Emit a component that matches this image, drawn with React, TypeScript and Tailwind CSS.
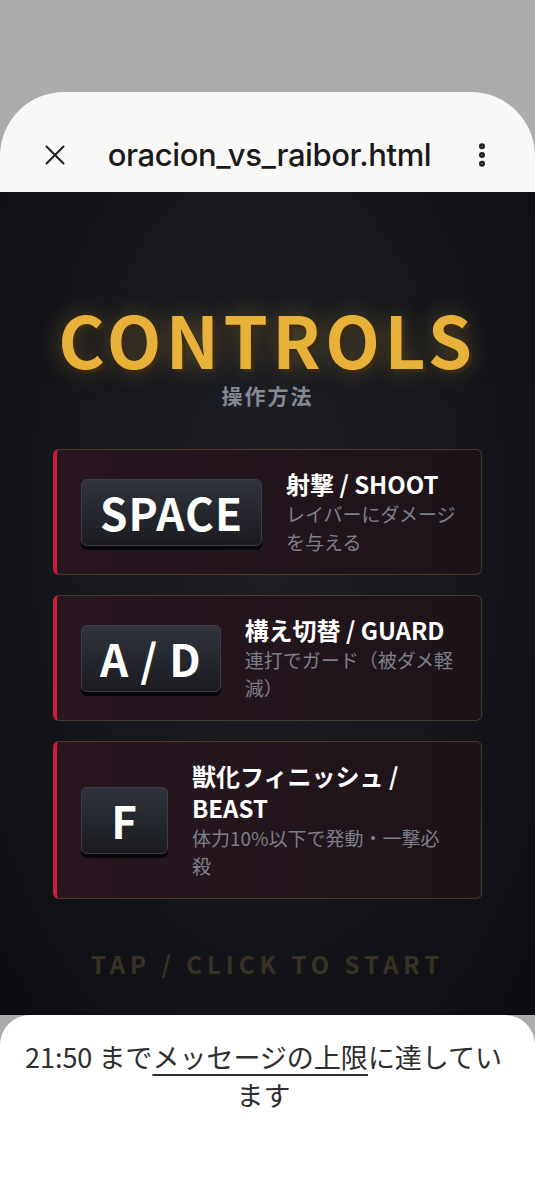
import { X, EllipsisVertical } from 'lucide-react'

interface ControlItem {
  keyLabel: string
  title: string
  desc: string
}

const CONTROLS: ControlItem[] = [
  { keyLabel: 'SPACE', title: '射撃 / SHOOT', desc: 'レイバーにダメージを与える' },
  { keyLabel: 'A / D', title: '構え切替 / GUARD', desc: '連打でガード（被ダメ軽減）' },
  { keyLabel: 'F', title: '獣化フィニッシュ / BEAST', desc: '体力10%以下で発動・一撃必殺' },
]

const jp = "font-['Noto_Sans_CJK_JP','Noto_Sans',sans-serif]"

function ControlCard({ item }: { item: ControlItem }) {
  return (
    <div className="flex items-center gap-6 rounded-md border border-[#4a3a2c] border-l-4 border-l-[#c81e3a] bg-gradient-to-r from-[#2a1620] to-[#1c1419] pl-6 pr-[24px] py-[18px]">
      <div className="flex-shrink-0 min-w-[87px] justify-center rounded-md border border-[#3b3e46] bg-gradient-to-b from-[#30333c] to-[#1a1c21] px-[18px] h-[67px] flex items-center shadow-[0_4px_0_#07080a]">
        <span className="text-[44px] font-bold text-white leading-none tracking-[1px]">{item.keyLabel}</span>
      </div>
      <div className="flex-1 min-w-0">
        <div className="text-[24px] font-bold text-white leading-[32px]">{item.title}</div>
        <div className="text-[19px] text-[#7d808a] leading-[28px]">{item.desc}</div>
      </div>
    </div>
  )
}

export default function App() {
  return (
    <div className="w-[535px] h-[1200px] bg-[#ababab] flex flex-col overflow-hidden">
      <div className="h-[92px] flex-shrink-0" />

      {/* Browser sheet header */}
      <div className="h-[100px] flex-shrink-0 bg-[#f8f8f6] rounded-t-[64px] flex items-center pt-[26px] px-[38px]">
        <X className="w-[34px] h-[34px] text-[#1e1e1e]" strokeWidth={1.4} />
        <div className="flex-1 text-center font-['Inter',sans-serif] text-[31px] font-medium text-[#1a1a1a] tracking-[-0.4px]">
          oracion_vs_raibor.html
        </div>
        <EllipsisVertical className="w-[30px] h-[30px] text-[#1e1e1e]" strokeWidth={2.8} />
      </div>

      {/* Game page */}
      <div className={`${jp} h-[823px] flex-shrink-0 bg-[radial-gradient(ellipse_at_50%_40%,#1e2026_0%,#15171c_55%,#0c0d11_100%)] flex flex-col items-center`}>
        <div className="mt-[106px] text-[71px] font-bold text-[#e8b13a] leading-[80px] tracking-[4.5px] [text-shadow:3px_3px_0_#3a2a10,0_0_24px_rgba(232,177,58,0.35)]">
          CONTROLS
        </div>
        <div className="mt-[3px] text-[21px] leading-[28px] font-bold text-[#858994] tracking-[2px]">操作方法</div>

        <div className="mt-[40px] w-[429px] flex flex-col gap-[20px]">
          {CONTROLS.map(c => (
            <ControlCard key={c.keyLabel} item={c} />
          ))}
        </div>

        <div className="mt-[47px] text-[24px] font-bold text-[#3a3324] tracking-[5px]">TAP / CLICK TO START</div>
      </div>

      {/* Bottom notice */}
      <div className="flex-1 bg-white rounded-t-[30px] pl-[16px] pr-[24px] pt-[23px]">
        <p className="text-center font-['Noto_Sans_CJK_JP',sans-serif] text-[27px] leading-[38px] text-[#2e2e2e]">
          <span>21:50 まで</span>
          <span className="underline underline-offset-[6px] decoration-[1.5px]">メッセージの上限</span>
          <span>に達しています</span>
        </p>
      </div>
    </div>
  )
}
